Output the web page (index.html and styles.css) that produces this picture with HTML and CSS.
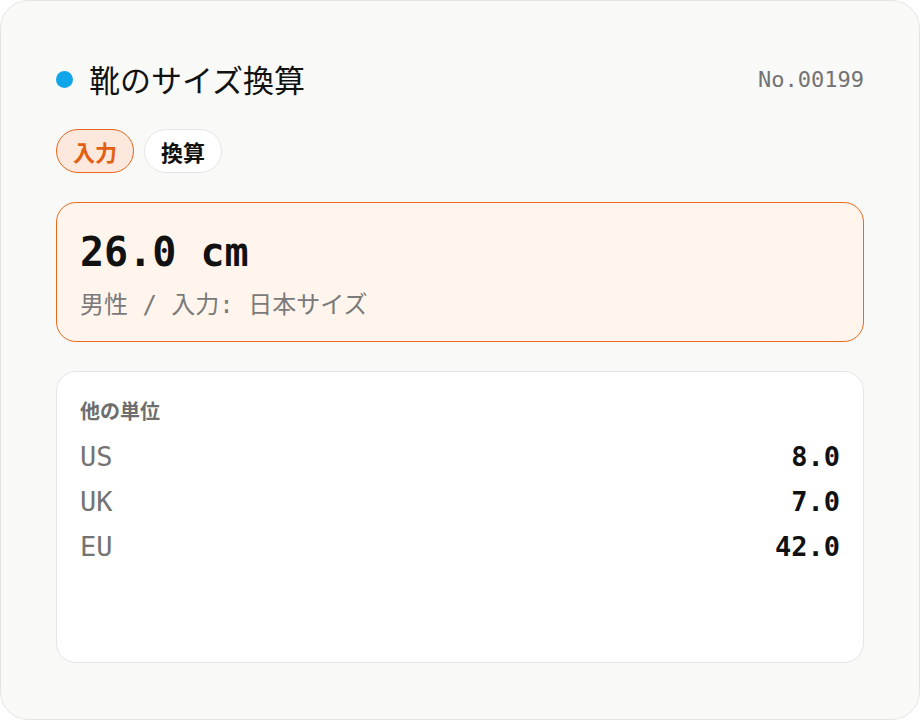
FILE: index.html
```html
<!DOCTYPE html>
<html lang="ja">
<head>
<meta charset="utf-8">
<link rel="stylesheet" href="styles.css">
</head>
<body>
<div class="card">
  <div class="header">
    <div class="title"><span class="dot"></span><h1>靴のサイズ換算</h1></div>
    <div class="num">No.00199</div>
  </div>
  <div class="chips">
    <span class="chip active">入力</span>
    <span class="chip">換算</span>
  </div>
  <div class="input-box">
    <div class="big">26.0 cm</div>
    <div class="sub">男性 / 入力: 日本サイズ</div>
  </div>
  <div class="units">
    <div class="units-title">他の単位</div>
    <div class="row"><span class="lbl">US</span><span class="val">8.0</span></div>
    <div class="row"><span class="lbl">UK</span><span class="val">7.0</span></div>
    <div class="row"><span class="lbl">EU</span><span class="val">42.0</span></div>
  </div>
</div>
</body>
</html>
```
FILE: styles.css
```css
html, body {
  margin: 0;
  padding: 0;
  background: #ffffff;
}
body {
  width: 920px;
  height: 720px;
  font-family: "Noto Sans CJK JP", sans-serif;
  color: #111;
}
.card {
  box-sizing: border-box;
  width: 920px;
  height: 720px;
  border: 1px solid #e4e4e2;
  border-radius: 28px;
  background: #f9f9f8;
  padding: 58px 55px 56px;
  display: flex;
  flex-direction: column;
}
.header {
  display: flex;
  align-items: center;
  justify-content: space-between;
  height: 40px;
}
.title {
  display: flex;
  align-items: center;
  gap: 16px;
}
.dot {
  width: 17px;
  height: 17px;
  border-radius: 50%;
  background: #0ea5e9;
}
h1 {
  margin: 0;
  font-size: 31px;
  font-weight: 400;
  line-height: 40px;
  color: #111;
}
.num {
  font-family: "DejaVu Sans Mono", monospace;
  font-size: 22px;
  color: #737373;
}
.chips {
  display: flex;
  gap: 10px;
  margin-top: 30px;
}
.chip {
  box-sizing: border-box;
  height: 44px;
  padding: 0 16px;
  border-radius: 22px;
  border: 1px solid #e5e5e5;
  background: #fff;
  font-size: 22px;
  font-weight: 700;
  line-height: 42px;
  color: #111;
}
.chip.active {
  background: #fce8dc;
  border-color: #e8651c;
  color: #e35f12;
}
.input-box {
  margin-top: 29px;
  box-sizing: border-box;
  height: 140px;
  border: 1px solid #ea6a1f;
  border-radius: 20px;
  background: #fff5ed;
  padding: 25px 23px;
  font-family: "DejaVu Sans Mono", "Noto Sans CJK JP", monospace;
}
.big {
  font-size: 40px;
  font-weight: 700;
  line-height: 48px;
  color: #111;
}
.sub {
  margin-top: 14px;
  font-size: 24px;
  line-height: 30px;
  color: #7a7a7a;
}
.units {
  margin-top: 29px;
  flex: 1;
  box-sizing: border-box;
  border: 1px solid #e5e5e5;
  border-radius: 20px;
  background: #fff;
  padding: 25px 23px;
}
.units-title {
  font-size: 20px;
  font-weight: 700;
  line-height: 28px;
  color: #6e6e6e;
  margin-bottom: 9px;
}
.row {
  display: flex;
  justify-content: space-between;
  align-items: baseline;
  height: 45px;
  line-height: 45px;
  font-family: "DejaVu Sans Mono", monospace;
  font-size: 27px;
}
.lbl {
  color: #737373;
}
.val {
  font-weight: 700;
  color: #111;
}
```
